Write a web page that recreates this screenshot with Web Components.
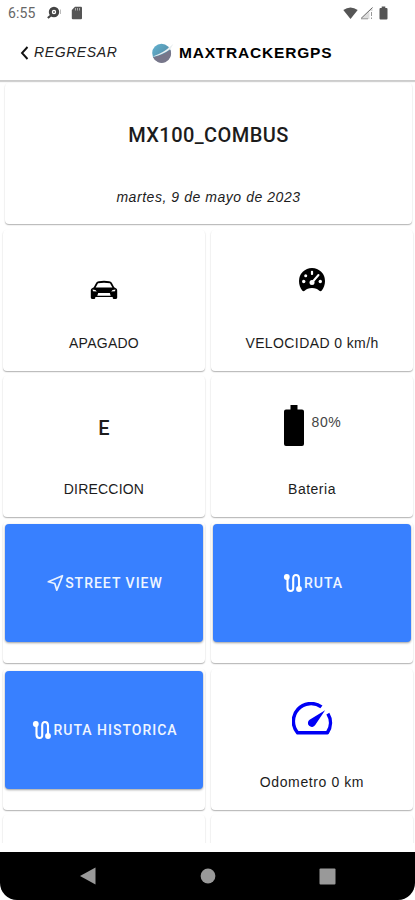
<!DOCTYPE html>
<html lang="es">
<head>
<meta charset="utf-8">
<title>MaxTrackerGPS</title>
<style>
  html, body {
    margin: 0;
    height: 100%;
    background-color: #fff;
    overflow: hidden;
  }
</style>
</head>
<body>
<tracker-app></tracker-app>

<template id="app-template">
  <style>
    :host {
      display: flex;
      flex-direction: column;
      height: 900px;
      width: 415px;
      overflow: hidden;
      color: #1c1c1c;
      font-family: "Liberation Sans", Arial, sans-serif;
      font-size: 14px;
      background-color: #fff;
      --card-shadow: 0 1px 1px rgba(0, 0, 0, 0.2), 0 1px 2px rgba(0, 0, 0, 0.13);
    }

    main {
      flex: 1;
      min-height: 0;
      margin-bottom: 9px;
      overflow: hidden;
    }

    .grid {
      display: grid;
      grid-template-columns: 202px 202px;
      grid-auto-rows: 141px;
      column-gap: 6px;
      row-gap: 5.2px;
      padding: 6px 0 0 3px;
    }

    svg { display: block; }
    .car { margin-top: 13px; }
    .level { display: flex; gap: 8px; padding-left: 1px; }
    .level span { color: #444; margin-top: 9px; letter-spacing: 0.6px; }
    .letter { font: 500 20px/24px Roboto, sans-serif; margin-top: 3px; }
  </style>
  <status-bar></status-bar>
  <app-header back="REGRESAR">MAXTRACKERGPS</app-header>
  <main>
    <unit-card name="MX100_COMBUS">martes, 9 de mayo de 2023</unit-card>
    <div class="grid">
      <info-tile label="APAGADO" spacing="0.25px">
        <svg class="car" width="28" height="22" viewBox="0 0 28 22">
          <path fill="#000" fill-rule="evenodd" d="M6.2 2.8Q7 1.4 8.800 1.200Q14 .5 19.200 1.200Q21 1.400 21.800 2.800L24.200 7.200L26.300 8.600Q27.200 9.300 27.200 10.500V17.600Q27.200 19 26 19H24Q22.700 19 22.700 17.700V17H5.300V17.700Q5.300 19 4 19H2Q.8 19 .8 17.600V10.500Q.8 9.300 1.700 8.600L3.800 7.200ZM8 3.200L5.600 7.500H22.400L20 3.200Q14 2.400 8 3.200ZM2.600 9.400L3 11.200L6.800 11.500Q6 9.500 2.600 9.400ZM25.400 9.400Q22 9.500 21.200 11.500L25 11.200ZM8.200 13L7.300 15.800H20.700L19.800 13Z"/>
        </svg>
      </info-tile>
      <info-tile label="VELOCIDAD 0 km/h" spacing="0.4px">
        <svg width="28" height="26" viewBox="0 0 28 26">
          <path fill="#000" d="M14 1A13 13 0 0 0 1 14C1 18 2.300 21 4.200 23.500Q5.500 24.800 7 23.500Q9 21 14 21T21 23.500Q22.500 24.800 23.800 23.500C25.700 21 27 18 27 14A13 13 0 0 0 14 1Z"/>
          <g fill="#fff">
            <rect x="12.900" y="3.700" width="2.200" height="4.300" rx="1"/>
            <circle cx="7.700" cy="8.700" r="1.500"/>
            <circle cx="5.700" cy="14.500" r="1.700"/>
            <circle cx="22.300" cy="14.500" r="1.700"/>
            <circle cx="14" cy="15.500" r="2.500"/>
          </g>
          <path stroke="#fff" stroke-width="2" stroke-linecap="round" d="M14 15.500L20.500 8"/>
        </svg>
      </info-tile>
      <info-tile label="DIRECCION" spacing="0.2px">
        <div class="letter">E</div>
      </info-tile>
      <info-tile label="Bateria" spacing="0.5px">
        <div class="level">
          <svg width="20" height="41" viewBox="0 0 20 41">
            <path fill="#000" d="M6.500 0H13.500V4.500H18Q20 4.500 20 6.500V39Q20 41 18 41H2Q0 41 0 39V6.500Q0 4.500 2 4.500H6.500Z"/>
          </svg>
          <span>80%</span>
        </div>
      </info-tile>
      <action-tile icon="send">STREET VIEW</action-tile>
      <action-tile icon="route">RUTA</action-tile>
      <action-tile icon="route">RUTA HISTORICA</action-tile>
      <info-tile label="Odometro 0 km" spacing="0.6px">
        <svg width="41" height="34" viewBox="0 0 42 35" style="margin-top: -4px">
          <path fill="none" stroke="#0000f5" stroke-width="3.600" stroke-linejoin="round" d="M30.200 5.100A18.200 18.200 0 0 0 5.700 31.700H36.300A18.200 18.200 0 0 0 36.800 12"/>
          <path fill="#0000f5" d="M34 8.500L23.800 23.800A4.100 4.100 0 1 1 18 18.200Z"/>
        </svg>
      </info-tile>
      <info-tile></info-tile>
      <info-tile></info-tile>
    </div>
  </main>
  <nav-bar></nav-bar>
</template>

<template id="status-template">
  <style>
    :host {
      display: flex;
      align-items: center;
      justify-content: space-between;
      height: 26px;
      padding: 0 27px 0 8px;
      box-sizing: border-box;
      color: #666;
      font: 14px/26px Roboto, sans-serif;
    }
    div { display: flex; align-items: center; }
    svg { display: block; }
    .time { width: 38px; letter-spacing: 0.1px; }
  </style>
  <div>
    <span class="time">6:55</span>
    <svg width="16" height="14" viewBox="0 0 16 14">
      <circle cx="8" cy="6" r="3.700" fill="none" stroke="#444" stroke-width="3"/>
      <circle cx="8" cy="6" r="1" fill="#666"/>
      <path stroke="#444" stroke-width="2.200" d="M5.500 9L1.800 12"/>
      <path stroke="#bbb" d="M14.500 3.500V8"/>
    </svg>
    <svg width="12" height="14" viewBox="0 0 12 14" style="margin-left: 9px">
      <path fill="#555" d="M4 .7H10Q11 .7 11 1.700V12.200Q11 13.200 10 13.200H1.800Q.8 13.200 .8 12.200V4Z"/>
      <path stroke="#aaa" d="M4.500 2V4.500M6.500 2V4.500M8.500 2V4.500"/>
    </svg>
  </div>
  <div>
    <svg width="15" height="12" viewBox="0 0 15 12">
      <path fill="#555" d="M.3 3Q7.500-2 14.700 3L7.500 12Z"/>
    </svg>
    <svg width="14" height="14" viewBox="0 0 14 14" style="margin-left: 2px">
      <path fill="#ddd" d="M1 13L12.500 1.500V5H9.500V13Z"/>
      <path fill="none" stroke="#666" d="M1 12.500L12.500 1.500"/>
      <path stroke="#999" d="M1 12.800H8M11.500 6V10M11.500 11.500V13"/>
    </svg>
    <svg width="9" height="14" viewBox="0 0 9 14" style="margin-left: 5px">
      <path fill="#555" d="M2.700 .5H6.300V2H7.500Q8.500 2 8.500 3V12.500Q8.500 13.500 7.500 13.500H1.500Q.5 13.500 .5 12.500V3Q.5 2 1.500 2H2.700Z"/>
    </svg>
  </div>
</template>

<template id="header-template">
  <style>
    :host {
      display: flex;
      align-items: center;
      height: 55px;
      padding-left: 20px;
      box-sizing: border-box;
      border-bottom: 1px solid #ccc;
      box-shadow: 0 1px 1px rgba(0, 0, 0, 0.18);
      position: relative;
    }
    .back {
      display: flex;
      align-items: center;
      width: 131px;
      gap: 5px;
      color: #222;
      font-style: italic;
      letter-spacing: 0.6px;
    }
    .back span { margin-top: -3px; }
    .logo { margin-right: 5px; }
    h1 {
      margin: 0;
      color: #000;
      font-size: 15.500px;
      letter-spacing: 0.8px;
    }
  </style>
  <div class="back">
    <svg width="9" height="14" viewBox="0 0 9 14">
      <path fill="none" stroke="#111" stroke-width="1.900" d="M7.500 1L2 7L7.500 13"/>
    </svg>
    <span></span>
  </div>
  <svg class="logo" width="23" height="20" viewBox="0 0 23 20">
    <defs>
      <linearGradient id="sky" x1="0" y1="0" x2="1" y2="1">
        <stop offset="0" stop-color="#62b4d2"/>
        <stop offset="1" stop-color="#507e98"/>
      </linearGradient>
    </defs>
    <circle cx="10.500" cy="10" r="9.300" fill="url(#sky)"/>
    <path fill="#77768a" d="M2 14.200Q12 12.500 19.300 6.800A9.300 9.300 0 0 1 2 14.200Z"/>
    <path fill="#e9eef0" d="M2.500 13.200Q12 10 18 4.500L22.500 .8L19.500 6Q12 11.500 2.500 13.800Z"/>
  </svg>
  <h1><slot></slot></h1>
</template>

<template id="unit-template">
  <style>
    :host {
      display: flex;
      flex-direction: column;
      align-items: center;
      height: 141px;
      margin: 2px 3px 0 5px;
      padding-top: 39px;
      box-sizing: border-box;
      border-radius: 4px;
      box-shadow: var(--card-shadow);
    }
    h2 {
      margin: 0;
      font: 500 20px/26px Roboto, sans-serif;
      letter-spacing: 0.42px;
    }
    p {
      margin: 41px 0 0;
      font-style: italic;
      line-height: 16px;
      letter-spacing: 0.55px;
    }
  </style>
  <h2></h2>
  <p><slot></slot></p>
</template>

<template id="info-template">
  <style>
    :host {
      display: flex;
      flex-direction: column;
      align-items: center;
      box-sizing: border-box;
      border-radius: 4px;
      box-shadow: var(--card-shadow);
    }
    .content {
      display: flex;
      justify-content: center;
      align-items: flex-start;
      height: 68px;
      padding-top: 37px;
      box-sizing: content-box;
    }
    .label { line-height: 16px; }
    :host([label="Bateria"]) .content { padding-top: 29px; height: 76px; }
  </style>
  <div class="content"><slot></slot></div>
  <div class="label"></div>
</template>

<template id="action-template">
  <style>
    :host {
      display: block;
      padding: 2px;
      box-sizing: border-box;
      border-radius: 4px;
      box-shadow: var(--card-shadow);
    }
    button {
      display: flex;
      align-items: center;
      justify-content: center;
      gap: 1px;
      width: 100%;
      height: 118px;
      padding: 0 0 0 2px;
      border: 0;
      border-radius: 4px;
      background-color: #3880ff;
      color: #eff5ff;
      font: 500 14px/18px Roboto, sans-serif;
      letter-spacing: 1px;
      box-shadow: 0 1px 2px rgba(0, 0, 0, 0.25), 0 1px 3px rgba(0, 0, 0, 0.15);
    }
    svg { display: block; }
  </style>
  <button><span class="icon"></span><slot></slot></button>
</template>

<template id="nav-template">
  <style>
    :host {
      display: block;
      height: 48px;
      background-color: #fff;
    }
    div {
      display: grid;
      grid-template-columns: 120px 120px 120px;
      justify-content: center;
      align-items: center;
      justify-items: center;
      height: 100%;
      background-color: #000;
      border-radius: 0 0 17px 17px;
    }
    svg { display: block; }
  </style>
  <div>
    <svg width="16" height="18" viewBox="0 0 16 18"><path fill="#999" d="M15.500 .5V17.500L0 9Z"/></svg>
    <svg width="16" height="16" viewBox="0 0 16 16"><circle cx="8" cy="8" r="7.400" fill="#999"/></svg>
    <svg width="17" height="17" viewBox="0 0 17 17"><rect x=".5" y=".5" width="16" height="16" rx="1" fill="#999"/></svg>
  </div>
</template>

<script>
const icons = {
  send: `<svg width="17" height="18" viewBox="0 0 17 18">
    <path fill="none" stroke="#e9f1ff" stroke-width="1.700" stroke-linejoin="round" d="M15.500 1.700L1.300 7.800L7.800 9.500L9.800 16.200Z"/>
  </svg>`,
  route: `<svg width="20" height="20" viewBox="0 0 20 20">
    <path fill="none" stroke="#fff" stroke-width="2.100" d="M4.500 4V14.500Q4.500 18 7.500 18T10.200 14.500V5.500Q10.200 2 13 2T16 5.500V16"/>
    <circle cx="3.800" cy="4" r="2.900" fill="#fff"/>
    <circle cx="16" cy="16" r="2.900" fill="#fff"/>
  </svg>`,
};

class TemplateElement extends HTMLElement {
  constructor(id) {
    super();
    this.attachShadow({ mode: "open" });
    const template = document.getElementById(id);
    this.shadowRoot.appendChild(template.content.cloneNode(true));
  }
}

class StatusBar extends TemplateElement {
  constructor() {
    super("status-template");
  }
}

class AppHeader extends TemplateElement {
  constructor() {
    super("header-template");
  }

  connectedCallback() {
    this.shadowRoot.querySelector(".back span").textContent =
      this.getAttribute("back");
  }
}

class UnitCard extends TemplateElement {
  constructor() {
    super("unit-template");
  }

  connectedCallback() {
    this.shadowRoot.querySelector("h2").textContent = this.getAttribute("name");
  }
}

class InfoTile extends TemplateElement {
  constructor() {
    super("info-template");
  }

  connectedCallback() {
    const label = this.shadowRoot.querySelector(".label");
    label.textContent = this.getAttribute("label") || "";
    label.style.letterSpacing = this.getAttribute("spacing") || "normal";
  }
}

class ActionTile extends TemplateElement {
  constructor() {
    super("action-template");
  }

  connectedCallback() {
    this.shadowRoot.querySelector(".icon").innerHTML =
      icons[this.getAttribute("icon")];
  }
}

class NavBar extends TemplateElement {
  constructor() {
    super("nav-template");
  }
}

class TrackerApp extends TemplateElement {
  constructor() {
    super("app-template");
  }
}

window.customElements.define("status-bar", StatusBar);
window.customElements.define("app-header", AppHeader);
window.customElements.define("unit-card", UnitCard);
window.customElements.define("info-tile", InfoTile);
window.customElements.define("action-tile", ActionTile);
window.customElements.define("nav-bar", NavBar);
window.customElements.define("tracker-app", TrackerApp);
</script>
</body>
</html>
